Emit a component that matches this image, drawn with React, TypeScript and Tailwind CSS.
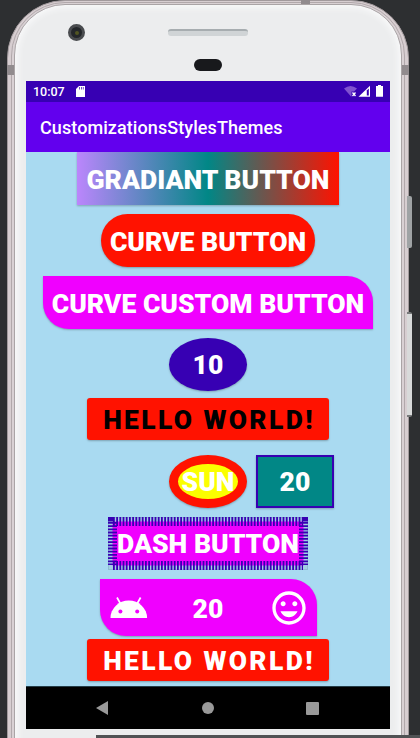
import React from "react";

const label = "font-black text-[26.55px] leading-none text-white whitespace-nowrap";
const raised = "shadow-[0_1px_2px_rgba(0,0,0,0.25)]";

function StatusBar() {
  return (
    <div className="flex h-[21px] shrink-0 items-center bg-[#3700b3] pl-[7px] pr-[6px] text-white">
      <span className="pt-px text-[12.5px] leading-none font-medium">10:07</span>
      <svg className="ml-[11px]" width="9" height="11" viewBox="0 0 9 11">
        <path d="M3 0H9V11H0V3Z" fill="#fff" />
        <path d="M3.5 1v2.5M5.5 1v2.5M7.3 1v2.5" stroke="#3700b3" strokeWidth="0.7" />
      </svg>
      <svg className="ml-auto" width="41" height="13" viewBox="0 0 41 13">
        <path d="M1 3.5Q7.5-1.5 14 3.5L11 6.5H8.5V11.5H8Z" fill="#8052d0" />
        <path d="M9.5 7.5l3 3.5M12.5 7.5l-3 3.5" stroke="#fff" strokeWidth="1.3" />
        <path d="M15.5 11.7L27 .8V11.7Z" fill="#fff" />
        <path d="M23.8 5.4L25.8 3.6V10.4H23.8Z" fill="#3700b3" />
        <path d="M33.5 1h1.5V0h3v1H40V11.7h-7V1Z" fill="#fff" />
      </svg>
    </div>
  );
}

function Ring() {
  return (
    <div className="flex h-[53px] w-[78px] items-center justify-center rounded-[50%] border-[9px] border-[#ff1200] bg-[#fbff00] shadow-[0_1px_2px_rgba(0,0,0,0.25)]">
      <span className={label + " pt-px"}>SUN</span>
    </div>
  );
}

function DashButton() {
  return (
    <div className="relative mt-[9px] flex h-[53px] w-[200px] items-center justify-center">
      <svg className="absolute inset-0" width="200" height="53">
        <rect x=".5" y=".5" width="199" height="52" fill="#a2cfe4" stroke="#8fbdd2" />
        <rect x="4.5" y="4.5" width="191" height="44" fill="#f000ff" />
        <path d="M5 4.5H195M5 48.5H195M4.5 5V48M195.5 5V48" fill="none" stroke="#3700b3" strokeWidth="9" strokeDasharray="1.8 1.4" />
        <path d="M0 0H5.5V4.5H0ZM195 0H200V4.5H195Z" fill="#3700b3" />
      </svg>
      <span className={label + " relative pt-px"}>DASH BUTTON</span>
    </div>
  );
}

function IconButton() {
  return (
    <div className={"mt-[9px] flex h-[57px] w-[217px] items-center justify-between rounded-tr-[26px] rounded-bl-[26px] bg-[#f000ff] pl-[10px] pr-[8px] " + raised}>
      <svg width="38" height="38" viewBox="0 0 38 38">
        <path d="M.5 32A18.3 17.5 0 0 1 37.1 32Z" transform="translate(0 -3)" fill="#fff" />
        <path d="M7 8.5l4.5 8M30.6 8.5l-4.5 8" stroke="#fff" strokeWidth="1.7" />
        <circle cx="10.4" cy="22.5" r="2" fill="#f000ff" />
        <circle cx="27.2" cy="22.5" r="2" fill="#f000ff" />
      </svg>
      <span className={label + " pt-[3px]"}>20</span>
      <svg width="40" height="40" viewBox="0 0 24 24" fill="#fff">
        <path d="M11.99 2C6.47 2 2 6.48 2 12s4.47 10 9.99 10C17.52 22 22 17.52 22 12S17.52 2 11.99 2zM12 20c-4.42 0-8-3.58-8-8s3.58-8 8-8 8 3.58 8 8-3.58 8-8 8zm3.5-9c.83 0 1.5-.67 1.5-1.5S16.33 8 15.5 8 14 8.67 14 9.5s.67 1.5 1.5 1.5zm-7 0c.83 0 1.5-.67 1.5-1.5S9.33 8 8.5 8 7 8.67 7 9.5 7.67 11 8.5 11zm3.5 6.5c2.33 0 4.31-1.46 5.11-3.5H6.89c.8 2.04 2.78 3.5 5.11 3.5z" />
      </svg>
    </div>
  );
}

function Screen() {
  return (
    <div className="flex h-[648px] w-[364px] shrink-0 flex-col overflow-hidden">
      <StatusBar />
      <div className="flex h-[50px] shrink-0 items-center bg-[#6200ee] pl-[14px] pt-[2px]">
        <span className="text-[18px] leading-none font-medium tracking-[0.08px] text-white">CustomizationsStylesThemes</span>
      </div>
      <div className="flex h-[534px] shrink-0 flex-col items-center bg-[#a9daf1]">
        <div className={"flex h-[53px] w-[262px] items-center justify-center bg-linear-to-r/srgb from-[#bb86fc] via-[#018786] to-[#ff1200] " + raised}>
          <span className={label + " pt-[3px]"}>GRADIANT BUTTON</span>
        </div>
        <div className={"mt-[9px] flex h-[53px] w-[214px] items-center justify-center rounded-[26.5px] bg-[#ff1200] " + raised}>
          <span className={label + " pt-[3px]"}>CURVE BUTTON</span>
        </div>
        <div className={"mt-[9px] flex h-[53px] w-[330px] items-center justify-center rounded-tr-[26px] rounded-bl-[26px] bg-[#f000ff] " + raised}>
          <span className={label + " pt-[3px]"}>CURVE CUSTOM BUTTON</span>
        </div>
        <div className={"mt-[9px] flex h-[53px] w-[78px] items-center justify-center rounded-[50%] bg-[#3700b3] " + raised}>
          <span className={label + " pt-[2px]"}>10</span>
        </div>
        <div className={"mt-[7px] flex h-[42px] w-[242px] items-center justify-center rounded-[3px] bg-[#ff1200] " + raised}>
          <span className="pt-[3px] pl-[2px] text-[26.4px] leading-none font-black tracking-[2.4px] whitespace-nowrap text-black">HELLO WORLD!</span>
        </div>
        <div className="mt-[15px] ml-[87px] flex gap-[9px]">
          <Ring />
          <div className={"flex h-[53px] w-[78px] items-center justify-center border-2 border-[#3700b3] bg-[#018786] " + raised}>
            <span className={label + " pt-[2px]"}>20</span>
          </div>
        </div>
        <DashButton />
        <IconButton />
        <div className={"mt-[3px] flex h-[42px] w-[242px] items-center justify-center rounded-[3px] bg-[#ff1200] " + raised}>
          <span className="pt-[2px] pl-[2px] text-[26.4px] leading-none font-black tracking-[2.4px] whitespace-nowrap text-white">HELLO WORLD!</span>
        </div>
      </div>
      <div className="flex h-[43px] shrink-0 items-center border-t border-[#243d48] bg-black pl-[70px]">
        <svg width="12" height="14" viewBox="0 0 12 14"><path d="M12 0V14L0 7Z" fill="#999" /></svg>
        <div className="ml-[94px] size-[12px] rounded-full bg-[#999]" />
        <div className="ml-[92px] size-[13px] rounded-[1px] bg-[#999]" />
      </div>
    </div>
  );
}

export default function App() {
  return (
    <div className="relative h-[738px] w-[420px] overflow-hidden bg-[#2d2f31] font-['Roboto',sans-serif]">
      <div className="absolute top-[196px] left-[407px] h-[52px] w-[5px] rounded-r-[2px] bg-[#9fa3a5]" />
      <div className="absolute top-[312px] left-[407px] h-[105px] w-[5px] rounded-r-[2px] border-y-2 border-[#77797a] bg-[#d8dada]" />
      <div className="ml-[7px] h-[800px] w-[402px] rounded-t-[58px] border border-[#a29a9d] bg-[#d7ced1] px-[3px] pt-[1px]">
        <div className="h-full rounded-t-[54px] border border-[#b1a8ab] bg-[#d9d1d4] px-[2px] pt-px">
          <div className="flex h-full flex-col items-center rounded-t-[51px] border border-[#aaa4a6] bg-[#ecedee] shadow-[inset_0_0_7px_2px_#fbfbfc]">
            <div className="relative h-[76px] w-[364px] shrink-0">
              <div className="absolute top-[19px] left-[42px] flex size-[17px] items-center justify-center rounded-full border-[3px] border-[#4a4c4f] bg-[#24272a]">
                <div className="size-[4px] rounded-full bg-[#515422]" />
              </div>
              <div className="absolute top-[24px] left-[142px] h-[7px] w-[80px] rounded-[3px] border-t-2 border-[#a7adb0] bg-[#d0d4d6]" />
              <div className="absolute top-[54px] left-[168px] h-[12px] w-[28px] rounded-full bg-[#18191c]" />
            </div>
            <Screen />
          </div>
        </div>
      </div>
      <div className="absolute top-[65px] left-[7px] h-[10px] w-[7px] bg-[#918b8e]" />
      <div className="absolute top-[65px] left-[402px] h-[10px] w-[7px] bg-[#918b8e]" />
      <div className="absolute top-0 left-[301px] h-[4px] w-[9px] bg-[#918b8e]" />
      <div className="absolute top-[735px] left-[96px] h-[3px] w-[324px] bg-[#505254]" />
    </div>
  );
}
